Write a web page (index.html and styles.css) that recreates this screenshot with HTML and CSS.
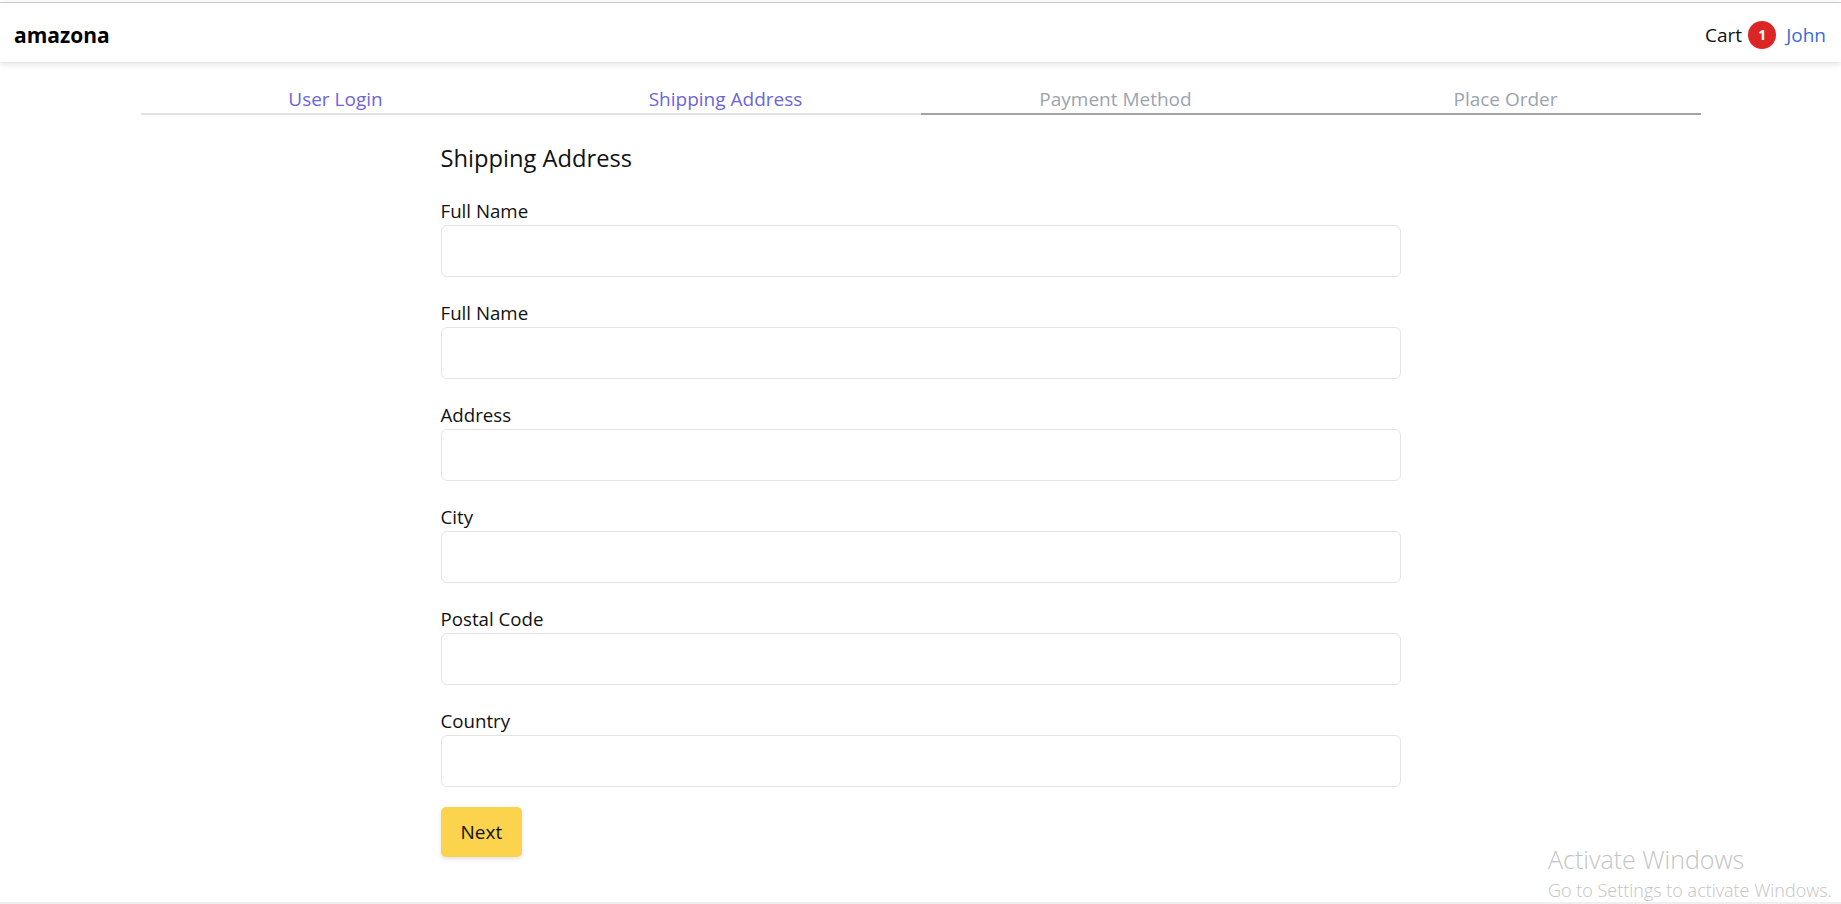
FILE: index.html
```html
<!DOCTYPE html>
<html lang="en">
<head>
<meta charset="utf-8">
<title>Shipping Address</title>
<link rel="stylesheet" href="styles.css">
</head>
<body>
<header class="navbar">
  <a class="brand" href="#">amazona</a>
  <nav class="nav-right">
    <a class="cart" href="#">Cart <span class="badge">1</span></a>
    <a class="user" href="#">John</a>
  </nav>
</header>

<div class="steps">
  <div class="step done">User Login</div>
  <div class="step done">Shipping Address</div>
  <div class="step">Payment Method</div>
  <div class="step">Place Order</div>
</div>

<main class="container">
  <h1 class="title">Shipping Address</h1>
  <form class="form">
    <div class="field">
      <label class="label" for="fullName">Full Name</label>
      <input class="input" id="fullName" type="text">
    </div>
    <div class="field">
      <label class="label" for="fullName2">Full Name</label>
      <input class="input" id="fullName2" type="text">
    </div>
    <div class="field">
      <label class="label" for="address">Address</label>
      <input class="input" id="address" type="text">
    </div>
    <div class="field">
      <label class="label" for="city">City</label>
      <input class="input" id="city" type="text">
    </div>
    <div class="field">
      <label class="label" for="postal">Postal Code</label>
      <input class="input" id="postal" type="text">
    </div>
    <div class="field last">
      <label class="label" for="country">Country</label>
      <input class="input" id="country" type="text">
    </div>
    <button class="btn-primary" type="button">Next</button>
  </form>
</main>

<footer class="footer"></footer>

<div class="watermark">
  <div class="wm-title">Activate Windows</div>
  <div class="wm-sub">Go to Settings to activate Windows.</div>
</div>
</body>
</html>
```

FILE: styles.css
```css
* {
  box-sizing: border-box;
}

html, body {
  margin: 0;
  padding: 0;
}

body {
  position: relative;
  padding-top: 2px;
  font-family: "Open Sans", "Noto Sans", "DejaVu Sans", sans-serif;
  color: #111;
  background: #fff;
  overflow: hidden;
}

a {
  text-decoration: none;
  color: inherit;
}

.navbar {
  height: 60px;
  border-top: 1px solid #c8c8c8;
  display: flex;
  align-items: center;
  justify-content: space-between;
  padding: 4px 15px 0 14px;
  box-shadow: 0 2px 6px rgba(0, 0, 0, 0.13);
  background: #fff;
  position: relative;
  z-index: 1;
}

.brand {
  font-size: 21px;
  font-weight: 700;
  line-height: 28px;
  color: #000;
}

.nav-right {
  display: flex;
  align-items: center;
  font-size: 19px;
  line-height: 28px;
}

.cart {
  display: flex;
  align-items: center;
  color: #111;
}

.badge {
  display: inline-flex;
  align-items: center;
  justify-content: center;
  width: 28px;
  height: 28px;
  margin-left: 6px;
  border-radius: 50%;
  background: #dc2626;
  color: #fff;
  font-size: 14px;
  font-weight: 700;
  line-height: 1;
}

.user {
  margin-left: 10px;
  color: #3b6cd4;
}

.steps {
  width: 1560px;
  margin: 23px auto 0;
  display: grid;
  grid-template-columns: repeat(4, 1fr);
}

.step {
  text-align: center;
  font-size: 19px;
  line-height: 28px;
  color: #9ca3af;
  border-bottom: 2px solid #a3a3a3;
}

.step.done {
  color: #6d64d8;
  border-bottom-color: #e2e2e2;
}

.container {
  width: 960px;
  margin: 27px auto 0;
  padding-bottom: 45px;
}

.title {
  margin: 0 0 23px;
  font-size: 23.7px;
  line-height: 32px;
  font-weight: 400;
  color: #111;
}

.form {
  margin: 0;
}

.field {
  display: flex;
  flex-direction: column;
  margin-bottom: 22px;
}

.field.last {
  margin-bottom: 20px;
}

.label {
  font-size: 18.7px;
  line-height: 28px;
  color: #111;
}

.input {
  width: 100%;
  height: 52px;
  border: 1px solid #e4e4e4;
  border-radius: 6px;
  padding: 0 12px;
  font: inherit;
  font-size: 18px;
  background: #fff;
  outline: none;
}

.btn-primary {
  display: block;
  padding: 11px 20px;
  font-family: inherit;
  font-size: 19px;
  line-height: 28px;
  color: #111;
  background: #fcd34d;
  border: none;
  border-radius: 5px;
  box-shadow: 0 2px 4px rgba(0, 0, 0, 0.12);
  cursor: pointer;
}

.footer {
  height: 2px;
  background: #efefef;
}

.watermark {
  position: absolute;
  left: 1548px;
  top: 844px;
  color: #c4c4c4;
  font-weight: 300;
  pointer-events: none;
}

.wm-title {
  font-size: 25px;
  line-height: 30px;
  white-space: nowrap;
}

.wm-sub {
  margin-top: 5px;
  font-size: 18px;
  line-height: 22px;
  white-space: nowrap;
}
```
